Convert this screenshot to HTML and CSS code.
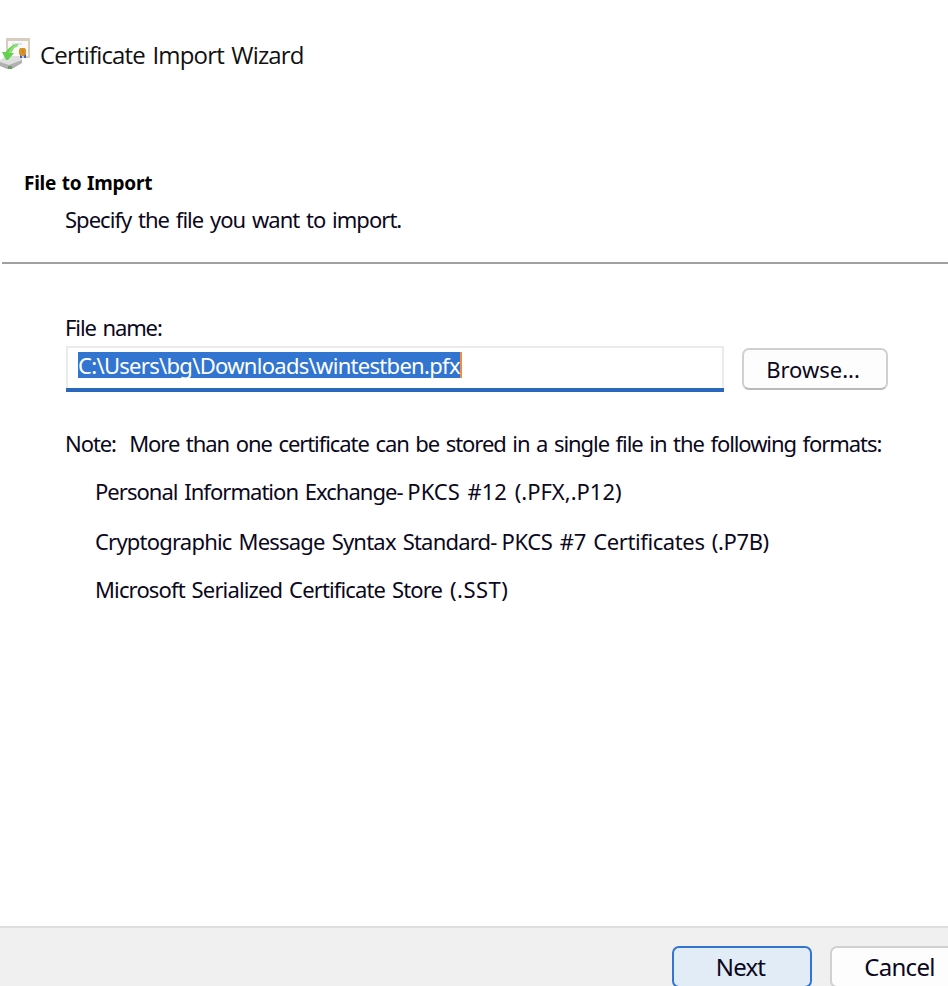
FILE: index.html
```
<!DOCTYPE html>
<html lang="en">
<head>
<meta charset="utf-8">
<title>Certificate Import Wizard</title>
<link rel="stylesheet" href="styles.css">
</head>
<body>
<div class="wizard">
  <header class="titlebar">
    <svg class="app-icon" width="30" height="32" viewBox="0 0 30 32">
      <path d="M6 0H30V20H6Z" fill="#d8cebf"/>
      <path d="M8 3H28V18H8Z" fill="#faf9f7"/>
      <path d="M12 6H22" stroke="#dce5ee" stroke-width="2"/>
      <path d="M0 22L6 18H20L22 20V24L12 30H7L0 27Z" fill="#dedede"/>
      <path d="M0 24L9 27L22 22V25L12 31H7L0 28Z" fill="#b0b0b0"/>
      <path d="M8 28H12V31H8Z" fill="#6d9b62"/>
      <path d="M20 16H22V20H20ZM24 16H26V20H24Z" fill="#2f67cf"/>
      <path d="M20 10H25L26 12V16L24 18H21L19 16V12Z" fill="#d79325"/>
      <path d="M22 12H24V15H22Z" fill="#cf8a24"/>
      <path d="M18 6L13 7L8 11L6 14H2L6 22H8L14 15H11L14 10L18 8Z" fill="#62d04c"/>
      <path d="M18 7L13 9L9 15" fill="none" stroke="#96e57c" stroke-width="1.5"/>
    </svg>
    <h1 class="title">Certificate Import Wizard</h1>
  </header>
  <section class="page-head">
    <h2 class="heading">File to Import</h2>
    <p class="subheading">Specify the file you want to import.</p>
  </section>
  <main class="content">
    <label class="label">File name:</label>
    <div class="file-row">
      <div class="field"><span class="selection">C:\Users\bg\Downloads\wintestben.pfx</span></div>
      <button class="btn browse"><span>Browse...</span></button>
    </div>
    <p class="note">Note:&nbsp; More than one certificate can be stored in a single file in the following formats:</p>
    <ul class="formats">
      <li class="pkcs12">Personal Information Exchange- <span>PKCS #12 (.PFX,.P12)</span></li>
      <li class="pkcs7">Cryptographic Message Syntax Standard- <span>PKCS #7 Certificates (.P7B)</span></li>
      <li class="sst">Microsoft Serialized Certificate Store <span>(.SST)</span></li>
    </ul>
  </main>
  <footer class="footer">
    <button class="btn next"><span>Next</span></button>
    <button class="btn cancel"><span>Cancel</span></button>
  </footer>
</div>
</body>
</html>
```
FILE: styles.css
```
* { box-sizing: border-box; }
body { margin: 0; background: #fff; overflow: hidden; }
.wizard {
  width: 948px; height: 986px; overflow: hidden;
  display: flex; flex-direction: column;
  font: 22px/30px "Noto Sans", sans-serif; color: #0b0820;
  word-spacing: 2px; white-space: nowrap;
}
h1, h2, p, ul { margin: 0; padding: 0; list-style: none; font-weight: 400; }
.titlebar { display: flex; gap: 10px; height: 130px; padding-top: 38px; }
.app-icon { flex: none; }
.title { font: 24px/32px "Open Sans", sans-serif; letter-spacing: -0.82px; color: #111; padding-top: 1px; }
.page-head { height: 134px; margin-left: 2px; border-bottom: 2px solid #a0a0a0; padding: 38px 0 0 22px; }
.heading { font-size: 19px; font-weight: 700; letter-spacing: -0.25px; word-spacing: 1px; color: #000; }
.subheading { padding: 6px 0 0 41px; letter-spacing: -0.97px; }
.content { flex: 1; padding: 48px 0 0 65px; }
.label { display: block; height: 34px; letter-spacing: -1.1px; }
.file-row { display: flex; align-items: flex-start; gap: 18px; margin-left: 1px; }
.field {
  width: 658px; height: 46px; padding: 6px 0 0 12px; line-height: 0;
  box-shadow: inset 0 -4px #2b67bd, inset 0 0 0 2px #ebebeb;
}
.selection {
  display: inline-block; height: 26px; line-height: 26px; letter-spacing: -0.7px;
  color: #fff; background: #3275d0; border-right: 2px solid #f58b3c;
}
.btn {
  display: flex; justify-content: center; flex: none; padding: 0;
  font: inherit; color: #0b0820;
  border: 2px solid #d0d0d0; border-radius: 7px; background: #fdfdfd;
}
.browse { width: 146px; height: 42px; margin-top: 2px; padding: 4px 4px 0 0; border-bottom-color: #bababa; }
.note { padding-top: 36px; letter-spacing: -1.075px; }
.formats { padding: 18px 0 0 30px; }
.formats li { height: 49px; }
.formats span { margin-left: -2px; }
.formats .pkcs12 { height: 50px; letter-spacing: -0.97px; }
.pkcs12 span { letter-spacing: 0; }
.formats .pkcs7 { height: 48px; letter-spacing: -0.79px; }
.pkcs7 span { letter-spacing: -0.39px; }
.sst { letter-spacing: -0.86px; }
.sst span { margin-left: 1px; letter-spacing: 0.5px; }
.footer {
  height: 60px; flex: none; display: flex; gap: 18px;
  padding: 18px 0 0 672px; border-top: 2px solid #dedede; background: #f0f0f0;
}
.next, .cancel { width: 140px; height: 42px; padding: 4px 3px 0 0; font-size: 24px; }
.next { background: #e2ecf7; border-color: #3275d0; letter-spacing: -0.8px; }
.cancel { padding-right: 1px; letter-spacing: -0.7px; }
```
